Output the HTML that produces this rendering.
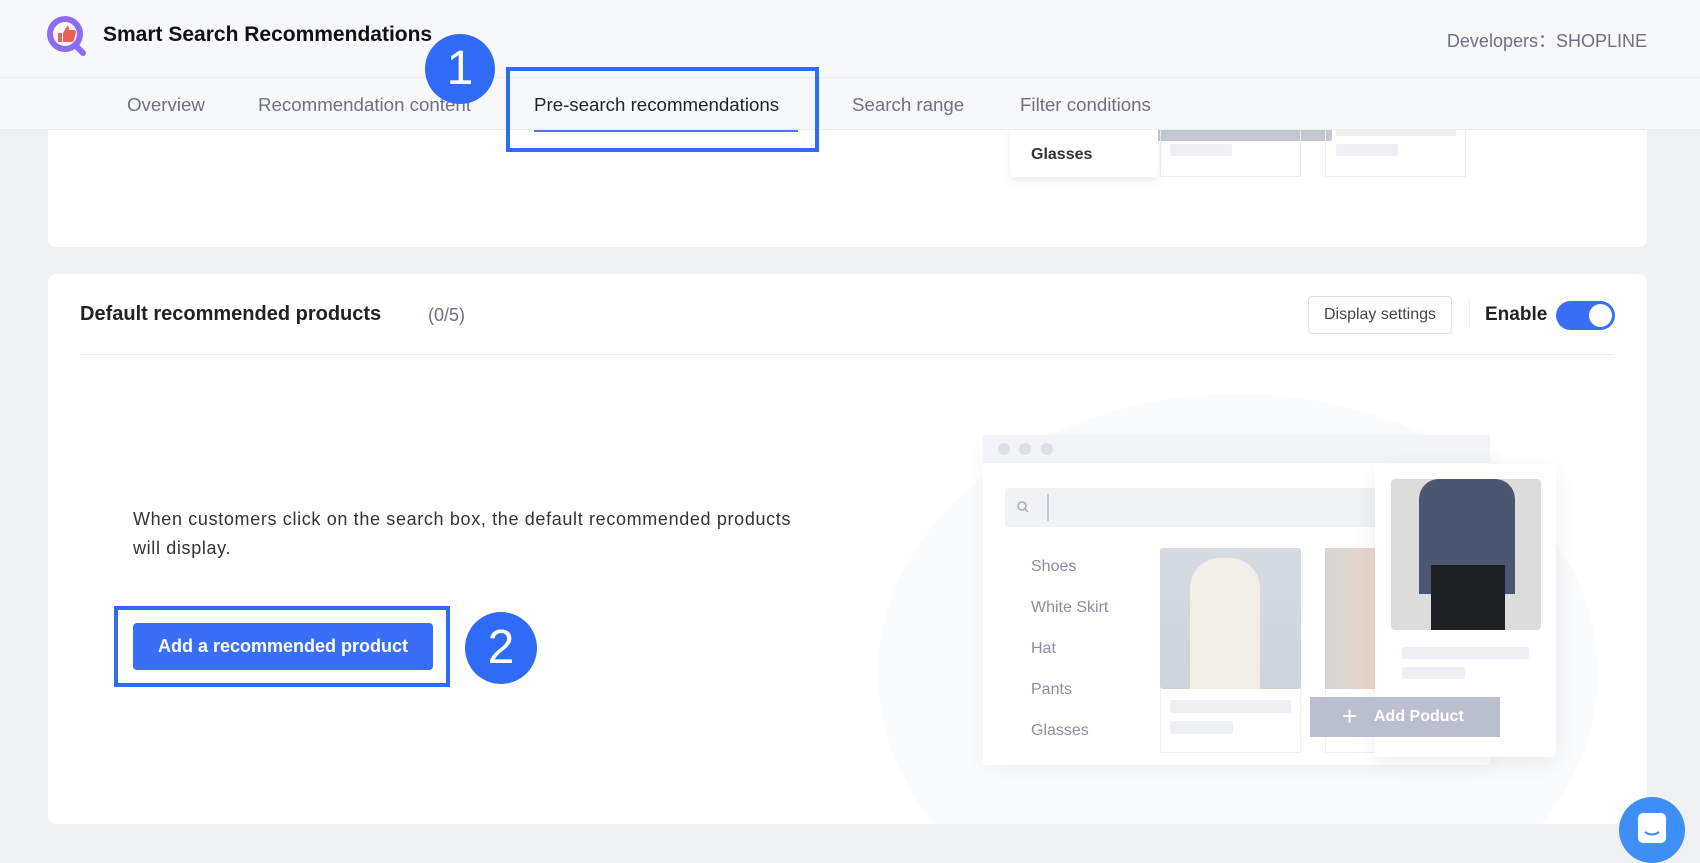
<!DOCTYPE html>
<html><head><meta charset="utf-8"><style>
*{box-sizing:border-box;margin:0;padding:0}
body{width:1700px;height:854px;overflow:hidden;background:#f0f1f4;font-family:"Liberation Sans",sans-serif;position:relative;color:#202124}
.a{position:absolute}
.t{white-space:nowrap}
.card{background:#fff;border-radius:8px}
.bar{background:#eef0f4;border-radius:2px}
</style></head><body>
<div class="a card" style="left:48px;top:100px;width:1599px;height:147px"></div>
<div class="a" style="left:1107px;top:128px;width:225px;height:13px;background:#c3c7d1;border-radius:2px"></div>
<div class="a" style="left:1160px;top:128px;width:141px;height:49px;border:1px solid #eceef2;border-top:none"></div>
<div class="a" style="left:1325px;top:128px;width:141px;height:49px;border:1px solid #eceef2;border-top:none"></div>
<div class="a bar" style="left:1170px;top:144px;width:62px;height:12px"></div>
<div class="a bar" style="left:1336px;top:128px;width:120px;height:8px"></div>
<div class="a bar" style="left:1336px;top:144px;width:62px;height:12px"></div>
<div class="a" style="left:1010px;top:124px;width:148px;height:53px;background:#fff;border-radius:4px;box-shadow:0 4px 10px rgba(0,0,0,.08)"></div>
<div class="a t" style="left:1031px;top:146px;font-size:16px;color:#333;font-weight:bold">Glasses</div>

<div class="a" style="left:0;top:0;width:1700px;height:78px;background:#f7f8fb;border-bottom:1px solid #eceef2"></div>
<svg class="a" style="left:46px;top:15px" width="44" height="42" viewBox="0 0 44 42">
<circle cx="19" cy="19" r="15" fill="none" stroke="#8b6cf3" stroke-width="6"/>
<line x1="29" y1="30" x2="37" y2="38" stroke="#8b6cf3" stroke-width="6" stroke-linecap="round"/>
<path d="M12 18h4v9h-4zM17 18l4-7c2 0 2 2 2 4h5c1 0 2 1 2 2l-2 8c0 1-1 2-2 2h-9z" fill="#f0605a"/>
</svg>
<div class="a t" style="left:103px;top:23px;font-size:21px;color:#111;font-weight:bold">Smart Search Recommendations</div>
<div class="a t" style="right:53px;top:27px;font-size:18px;color:#6b7280">Developers：SHOPLINE</div>
<div class="a" style="left:0;top:78px;width:1700px;height:52px;background:#f7f8fb;border-bottom:1px solid #eceef2"></div>
<div class="a t" style="left:127px;top:94px;font-size:18.7px;color:#6b7280">Overview</div>
<div class="a t" style="left:258px;top:94px;font-size:18.7px;color:#6b7280">Recommendation content</div>
<div class="a t" style="left:534px;top:94px;font-size:18.7px;color:#1f2329">Pre-search recommendations</div>
<div class="a t" style="left:852px;top:94px;font-size:18.7px;color:#6b7280">Search range</div>
<div class="a t" style="left:1020px;top:94px;font-size:18.7px;color:#6b7280">Filter conditions</div>
<div class="a" style="left:534px;top:130px;width:264px;height:2px;background:#4a78e0"></div>
<div class="a" style="left:506px;top:67px;width:313px;height:85px;border:4px solid #2f6bf5"></div>
<div class="a" style="left:425px;top:34px;width:70px;height:70px;border-radius:50%;background:#2f6bf5;color:#fff;font-size:48px;text-align:center;line-height:70px">1</div>

<div class="a card" style="left:48px;top:274px;width:1599px;height:550px;overflow:hidden">
<div class="a" style="left:830px;top:120px;width:720px;height:560px;border-radius:50%;background:#fafbfc"></div>
</div>
<div class="a t" style="left:80px;top:303px;font-size:20px;color:#222;font-weight:bold">Default recommended products</div>
<div class="a t" style="left:428px;top:305px;font-size:18px;color:#6b7280">(0/5)</div>
<div class="a t" style="left:1308px;top:296px;width:144px;height:38px;border:1px solid #dcdfe6;border-radius:4px;font-size:16px;color:#444;text-align:center;line-height:36px">Display settings</div>
<div class="a" style="left:1469px;top:301px;width:1px;height:28px;background:#eceef2"></div>
<div class="a t" style="left:1485px;top:304px;font-size:19px;color:#222;font-weight:bold">Enable</div>
<div class="a" style="left:1556px;top:301px;width:59px;height:29px;border-radius:15px;background:#3a6ef6"><div class="a" style="right:3px;top:3px;width:23px;height:23px;border-radius:50%;background:#fff"></div></div>
<div class="a" style="left:79px;top:354px;width:1535px;height:1px;background:#eceef2"></div>
<div class="a" style="left:133px;top:505px;font-size:18px;letter-spacing:.65px;line-height:29px;color:#333;width:760px">When customers click on the search box, the default recommended products<br>will display.</div>
<div class="a t" style="left:133px;top:623px;width:300px;height:47px;background:#3a6ef6;border-radius:4px;color:#fff;font-size:18px;font-weight:bold;text-align:center;line-height:47px">Add a recommended product</div>
<div class="a" style="left:114px;top:606px;width:336px;height:81px;border:4px solid #2f6bf5"></div>
<div class="a" style="left:465px;top:612px;width:72px;height:72px;border-radius:50%;background:#2f6bf5;color:#fff;font-size:48px;text-align:center;line-height:72px">2</div>

<div class="a" style="left:983px;top:435px;width:507px;height:330px;background:#fff;box-shadow:0 6px 20px rgba(0,0,0,.04)"></div>
<div class="a" style="left:983px;top:435px;width:507px;height:28px;background:#f3f4f7"></div>
<div class="a" style="left:998px;top:443px;width:12px;height:12px;border-radius:50%;background:#dfe1e6"></div>
<div class="a" style="left:1019px;top:443px;width:12px;height:12px;border-radius:50%;background:#dfe1e6"></div>
<div class="a" style="left:1041px;top:443px;width:12px;height:12px;border-radius:50%;background:#dfe1e6"></div>
<div class="a" style="left:1005px;top:488px;width:400px;height:39px;background:#f1f2f6;border-radius:3px"></div>
<svg class="a" style="left:1016px;top:500px" width="14" height="14"><circle cx="6" cy="6" r="4" fill="none" stroke="#aab" stroke-width="1.5"/><line x1="9" y1="9" x2="12" y2="12" stroke="#aab" stroke-width="1.5"/></svg>
<div class="a" style="left:1047px;top:494px;width:2px;height:27px;background:#c5c8d0"></div>
<div class="a t" style="left:1031px;top:546px;font-size:16px;color:#8a8f9c;line-height:41px">Shoes<br>White Skirt<br>Hat<br>Pants<br>Glasses</div>
<div class="a" style="left:1160px;top:548px;width:141px;height:205px;border:1px solid #f0f1f4"></div>
<div class="a" style="left:1160px;top:548px;width:141px;height:141px;border-radius:3px;background:linear-gradient(#d6dbe1,#cfd4db)"><div class="a" style="left:30px;top:10px;width:70px;height:131px;background:#f1eee8;border-radius:30px 30px 0 0"></div></div>
<div class="a bar" style="left:1170px;top:700px;width:121px;height:13px"></div>
<div class="a bar" style="left:1170px;top:721px;width:63px;height:13px"></div>
<div class="a" style="left:1325px;top:548px;width:60px;height:205px;border:1px solid #f0f1f4"></div>
<div class="a" style="left:1325px;top:548px;width:60px;height:141px;background:linear-gradient(90deg,#d9d5d2,#ecd8cc)"></div>
<div class="a" style="left:1375px;top:464px;width:181px;height:293px;background:#fff;border-radius:4px;box-shadow:0 6px 24px rgba(0,0,0,.07)"></div>
<div class="a" style="left:1391px;top:479px;width:150px;height:151px;border-radius:4px;background:#dcdcdd;overflow:hidden">
<div class="a" style="left:28px;top:0;width:96px;height:115px;background:#4b5670;border-radius:20px 20px 0 0"></div>
<div class="a" style="left:40px;top:86px;width:74px;height:65px;background:#1e2024"></div>
</div>
<div class="a bar" style="left:1402px;top:647px;width:127px;height:12px"></div>
<div class="a bar" style="left:1402px;top:667px;width:63px;height:12px"></div>
<div class="a t" style="left:1310px;top:697px;width:190px;height:40px;background:#b9bfcd;color:#fff;font-size:16px;font-weight:bold;line-height:40px"><span style="position:absolute;left:32px;top:-1px;font-size:26px;font-weight:normal">+</span><span style="position:absolute;left:64px">Add Poduct</span></div>

<div class="a" style="left:1619px;top:797px;width:66px;height:66px;border-radius:50%;background:#3d8ef5"></div>
<div class="a" style="left:1638px;top:813px;width:28px;height:30px;border-radius:5px;background:#fff"></div>
<svg class="a" style="left:1641px;top:828px" width="22" height="12"><path d="M4 4q7 5 14 0" stroke="#3d8ef5" stroke-width="2" fill="none"/></svg>
</body></html>
